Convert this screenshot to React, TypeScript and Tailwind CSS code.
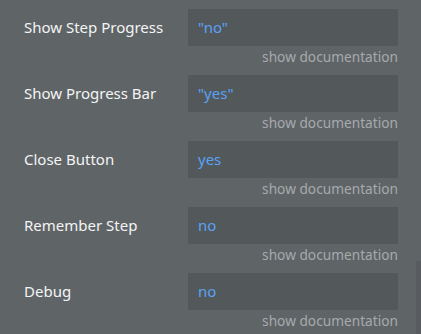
const rows = [
  { label: 'Show Step Progress', value: '"no"' },
  { label: 'Show Progress Bar', value: '"yes"' },
  { label: 'Close Button', value: 'yes' },
  { label: 'Remember Step', value: 'no' },
  { label: 'Debug', value: 'no' },
];

function PropertyRow({ label, value }: { label: string; value: string }) {
  return (
    <div className="flex">
      <div className="flex h-[37px] w-[188px] shrink-0 items-center pl-6 text-[15px] text-[#f4f4f4]">
        {label}
      </div>
      <div className="flex w-[210px] flex-col">
        <div className="flex h-[37px] items-center bg-[#53585b] px-[10px] text-[15px] text-[#5aa2f5]">
          {value}
        </div>
        <div className="h-[29px] pt-[1px] text-right text-[13.7px] leading-[20px] text-[#a6aaad]">
          show documentation
        </div>
      </div>
    </div>
  );
}

export default function App() {
  return (
    <div className="relative h-[334px] w-[421px] overflow-hidden bg-[#5f6467] pt-[9px] font-['Noto_Sans',sans-serif]">
      {rows.map((r) => (
        <PropertyRow key={r.label} label={r.label} value={r.value} />
      ))}
      {/* scrollbar track */}
      <div className="absolute top-[261px] right-0 bottom-0 w-[5px] bg-[#585c60]" />
    </div>
  );
}
